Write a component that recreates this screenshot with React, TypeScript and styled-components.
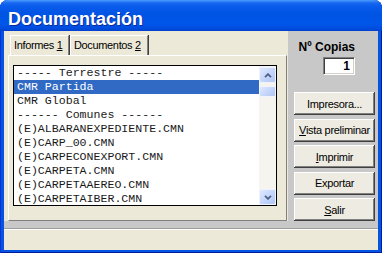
import styled, { createGlobalStyle } from 'styled-components';

const GlobalStyle = createGlobalStyle`
  html, body {
    margin: 0;
    padding: 0;
    overflow: hidden;
    background: #ffffff;
  }
`;

const Window = styled.div`
  width: 382px;
  height: 253px;
  display: flex;
  flex-direction: column;
  background: #0553e1;
  border-radius: 8px 8px 0 0;
  box-shadow: inset 1px 0 #0831d9, inset -1px 0 #001ea0, inset 0 -1px #001ea0;
  overflow: hidden;
  font-family: 'Liberation Sans', Arial, sans-serif;
`;

const TitleBar = styled.div`
  height: 31px;
  flex-shrink: 0;
  box-sizing: border-box;
  padding: 9px 0 0 8px;
  background: linear-gradient(
    180deg,
    #4a9bff 0px,
    #1767ee 3px,
    #0a5cec 6px,
    #0054e3 14px,
    #0056ea 24px,
    #004bdb 29px,
    #003fcb 31px
  );
  color: #ffffff;
  font-weight: bold;
  font-size: 18px;
  line-height: 20px;
  text-shadow: 1px 1px #0c2a9a;
`;

const Client = styled.div`
  flex: 1;
  margin: 0 4px 3px;
  background: #c8c8c8;
  display: flex;
  flex-direction: column;
`;

const Main = styled.div`
  height: 190px;
  display: flex;
`;

const TabArea = styled.div`
  width: 284px;
  box-sizing: border-box;
  padding: 4px 1px 0 4px;
  background: #ece9d8;
  display: flex;
  flex-direction: column;
`;

const TabRow = styled.div`
  display: flex;
  padding-left: 2px;
  height: 20px;
`;

const Tab = styled.div<{ $w: number }>`
  width: ${(p) => p.$w}px;
  height: 20px;
  box-sizing: border-box;
  margin-right: 1px;
  padding-left: 3px;
  border-top: 1px solid #ffffff;
  border-left: 1px solid #ffffff;
  border-right: 1px solid #808080;
  box-shadow: 1px 0 #404040;
  font-size: 11px;
  letter-spacing: -0.35px;
  line-height: 18px;
  color: #000000;
  white-space: nowrap;
`;

const Mnemonic = styled.span`
  text-decoration: underline;
`;

const TabPanel = styled.div`
  flex: 1;
  box-sizing: border-box;
  padding: 9px 0 0 4px;
  border-top: 1px solid #ffffff;
  border-left: 1px solid #ffffff;
  border-right: 1px solid #808080;
  border-bottom: 1px solid #808080;
`;

const ListBox = styled.div`
  width: 264px;
  height: 141px;
  box-sizing: border-box;
  border: 1px solid #000000;
  background: #ffffff;
  display: flex;
  overflow: hidden;
`;

const Rows = styled.div`
  flex: 1;
  overflow: hidden;
`;

const Row = styled.div<{ $selected?: boolean }>`
  height: 14px;
  line-height: 14px;
  padding-left: 3px;
  font-family: 'Liberation Mono', 'Courier New', monospace;
  font-size: 11.6px;
  white-space: pre;
  color: ${(p) => (p.$selected ? '#ffffff' : '#1a1a1a')};
  background: ${(p) => (p.$selected ? '#316ac5' : 'transparent')};
`;

const ScrollBar = styled.div`
  width: 17px;
  box-sizing: border-box;
  padding: 1px 0 0;
  background: #f5f4ef;
  display: flex;
  flex-direction: column;
`;

const ScrollButton = styled.div`
  height: 16px;
  flex-shrink: 0;
  box-sizing: border-box;
  border: 1px solid #eef3fe;
  border-radius: 2px;
  background: linear-gradient(135deg, #dfe8fe 0%, #c4d5fb 55%, #b1c6f4 100%);
  display: flex;
  align-items: center;
  justify-content: center;
`;

const Thumb = styled(ScrollButton)`
  height: 11px;
  margin-top: 3px;
`;

const Track = styled.div`
  flex: 1;
`;

const SidePanel = styled.div`
  flex: 1;
  box-sizing: border-box;
  padding: 9px 3px 0 6px;
  display: flex;
  flex-direction: column;
`;

const CopiesBlock = styled.div`
  align-self: flex-end;
  margin-right: 20px;
  display: flex;
  flex-direction: column;
  align-items: flex-end;
`;

const CopiesLabel = styled.label`
  font-size: 12px;
  font-weight: bold;
  line-height: 14px;
  color: #000000;
`;

const CopiesInput = styled.input`
  width: 32px;
  height: 18px;
  margin: 3px 0 0;
  box-sizing: border-box;
  padding: 0 4px 0 0;
  border-style: solid;
  border-width: 1px;
  border-color: #808080 #ffffff #ffffff #808080;
  box-shadow: inset 1px 1px #404040, inset -1px -1px #d4d0c8;
  background: #ffffff;
  text-align: right;
  font-family: 'Liberation Sans', Arial, sans-serif;
  font-size: 12px;
  font-weight: bold;
  color: #000000;
  outline: none;
`;

const ButtonStack = styled.div`
  margin-top: 17px;
  display: flex;
  flex-direction: column;
  gap: 3.5px;
`;

const Button = styled.button`
  height: 23px;
  box-sizing: border-box;
  padding: 0;
  border: none;
  background: #edebe2;
  box-shadow: inset -1px -1px #404040, inset 1px 1px #ffffff, inset -2px -2px #808080;
  font-family: 'Liberation Sans', Arial, sans-serif;
  font-size: 11px;
  letter-spacing: -0.3px;
  color: #000000;
  text-align: center;
  white-space: nowrap;
`;

const Band = styled.div`
  height: 7px;
`;

const StatusBar = styled.div`
  flex: 1;
  background: #ece9d8;
  border-top: 1px solid #9d9d9d;
  box-shadow: inset 0 1px #ffffff;
`;

const Arrow = ({ up }: { up?: boolean }) => (
  <svg width="8" height="5" viewBox="0 0 8 5">
    <path
      d={up ? 'M1 4.2 L4 1.2 L7 4.2' : 'M1 0.8 L4 3.8 L7 0.8'}
      fill="none"
      stroke="#4d6185"
      strokeWidth="1.8"
    />
  </svg>
);

const items = [
  '----- Terrestre -----',
  'CMR Partida',
  'CMR Global',
  '------ Comunes ------',
  '(E)ALBARANEXPEDIENTE.CMN',
  '(E)CARP_00.CMN',
  '(E)CARPECONEXPORT.CMN',
  '(E)CARPETA.CMN',
  '(E)CARPETAAEREO.CMN',
  '(E)CARPETAIBER.CMN',
];

export default function App() {
  return (
    <>
      <GlobalStyle />
      <Window>
        <TitleBar>Documentación</TitleBar>
        <Client>
          <Main>
            <TabArea>
              <TabRow>
                <Tab $w={59}>
                  Informes <Mnemonic>1</Mnemonic>
                </Tab>
                <Tab $w={78}>
                  Documentos <Mnemonic>2</Mnemonic>
                </Tab>
              </TabRow>
              <TabPanel>
                <ListBox>
                  <Rows>
                    {items.map((item, i) => (
                      <Row key={item} $selected={i === 1}>
                        {item}
                      </Row>
                    ))}
                  </Rows>
                  <ScrollBar>
                    <ScrollButton>
                      <Arrow up />
                    </ScrollButton>
                    <Thumb />
                    <Track />
                    <ScrollButton>
                      <Arrow />
                    </ScrollButton>
                  </ScrollBar>
                </ListBox>
              </TabPanel>
            </TabArea>
            <SidePanel>
              <CopiesBlock>
                <CopiesLabel>Nº Copias</CopiesLabel>
                <CopiesInput value="1" readOnly />
              </CopiesBlock>
              <ButtonStack>
                <Button>Impresora...</Button>
                <Button>
                  <Mnemonic>V</Mnemonic>ista preliminar
                </Button>
                <Button>
                  <Mnemonic>I</Mnemonic>mprimir
                </Button>
                <Button>Exportar</Button>
                <Button>
                  <Mnemonic>S</Mnemonic>alir
                </Button>
              </ButtonStack>
            </SidePanel>
          </Main>
          <Band />
          <StatusBar />
        </Client>
      </Window>
    </>
  );
}
